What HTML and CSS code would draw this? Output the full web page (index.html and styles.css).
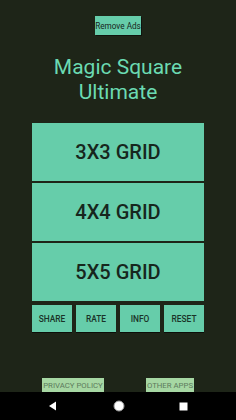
FILE: index.html
```html
<!DOCTYPE html>
<html lang="en">
<head>
  <meta charset="UTF-8">
  <meta name="viewport" content="width=device-width, initial-scale=1.0">
  <title>Magic Square Ultimate</title>
  <link rel="stylesheet" href="styles.css">
</head>
<body>

<div class="screen">
  <!-- 상단 광고 제거 버튼 -->
  <div class="top-bar">
    <button class="remove-ads">Remove Ads</button>
  </div>

  <h1 class="title">Magic Square<br>Ultimate</h1>

  <!-- 그리드 선택 -->
  <div class="grid-buttons">
    <button class="grid-button">3X3 GRID</button>
    <button class="grid-button">4X4 GRID</button>
    <button class="grid-button">5X5 GRID</button>
  </div>

  <div class="small-buttons">
    <button>SHARE</button>
    <button>RATE</button>
    <button>INFO</button>
    <button>RESET</button>
  </div>

  <!-- 하단 링크 -->
  <div class="footer-links">
    <button class="link-button privacy">PRIVACY POLICY</button>
    <button class="link-button">OTHER APPS</button>
  </div>
</div>

<div class="nav-bar">
  <svg width="10" height="10" viewBox="0 0 10 10"><polygon points="8,0.5 8,9.5 1,5" fill="#fff"/></svg>
  <svg width="12" height="12" viewBox="0 0 12 12"><circle cx="6" cy="6" r="5" fill="#fff" stroke="#9a9a9a" stroke-width="1"/><circle cx="6" cy="6" r="3.3" fill="#fff"/></svg>
  <svg width="9" height="9" viewBox="0 0 9 9"><rect x="0.5" y="0.5" width="8" height="8" fill="#fff"/></svg>
</div>

</body>
</html>
```

FILE: styles.css
```css
body {
  margin: 0;
  width: 236px;
  height: 420px;
  display: flex;
  flex-direction: column;
  background-color: #1e2518;
  font-family: Roboto, "Noto Sans", sans-serif;
  overflow: hidden;
}

button {
  font-family: Roboto, "Noto Sans", sans-serif;
  border: none;
  padding: 0;
  margin: 0;
  cursor: pointer;
}

.screen {
  height: 392px;
  display: flex;
  flex-direction: column;
}

/* 광고 제거 */
.top-bar {
  display: flex;
  justify-content: center;
  padding-top: 16px;
}

.remove-ads {
  width: 46px;
  height: 19px;
  font-size: 8.2px;
  color: #18261c;
  background-color: #66cdaa;
  box-shadow: 1px 1px 0 rgba(0, 0, 0, 0.45);
  white-space: nowrap;
}

.title {
  margin: 20px 0 0 0;
  font-size: 21px;
  font-weight: normal;
  line-height: 25px;
  text-align: center;
  color: #6bdab2;
}

/* 큰 버튼 */
.grid-buttons {
  display: flex;
  flex-direction: column;
  gap: 2px;
  margin: 18px 32px 0 32px;
}

.grid-button {
  height: 58px;
  font-size: 20px;
  font-weight: 500;
  color: #17271d;
  background-color: #66cdaa;
}

.small-buttons {
  display: flex;
  gap: 4px;
  margin: 4px 32px 0 32px;
}

.small-buttons button {
  flex: 1;
  height: 27px;
  font-size: 8.4px;
  font-weight: 500;
  color: #1a3328;
  background-color: #66cdaa;
  box-shadow: 0 1px 0 rgba(0, 0, 0, 0.6);
}

/* 하단 링크 */
.footer-links {
  display: flex;
  gap: 42px;
  padding-left: 42px;
  margin-top: auto;
}

.link-button {
  height: 14px;
  width: 48px;
  font-size: 7.8px;
  color: #5c7a5c;
  background-color: #a6d7a3;
  white-space: nowrap;
}

.link-button.privacy {
  width: 62px;
}

.nav-bar {
  height: 28px;
  background-color: #000;
  display: flex;
  align-items: center;
  justify-content: space-between;
  padding: 0 48px 0 48px;
}
```
